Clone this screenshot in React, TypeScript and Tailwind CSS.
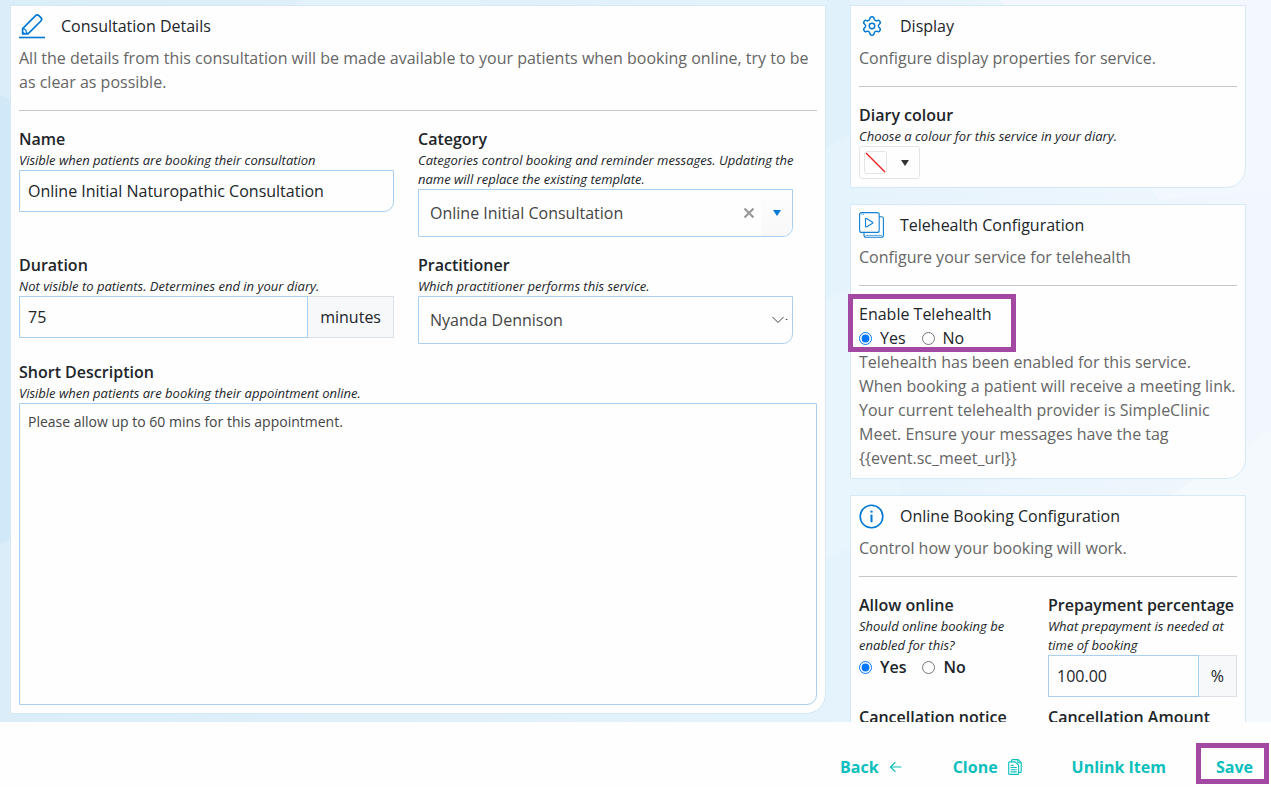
import { useState } from 'react';
import type { ReactNode } from 'react';
import { Settings } from 'lucide-react';

const PencilIcon = () => (
  <svg width="27" height="26" viewBox="0 0 27 26" fill="none" stroke="#0078d4" strokeWidth="1.7" strokeLinejoin="round" className="-mr-px shrink-0">
    <path d="M3.6 20.8v-5.2L16.6 2.7a2.4 2.4 0 0 1 3.3 0l2 2a2.4 2.4 0 0 1 0 3.3L9 20.8z" />
    <path d="M3.8 16l1.6-.2 1.7 1.7v1.6l1.7 1.5M5.2 19.4l-1.5 1.4" strokeWidth="1.2" />
    <path d="M0 24.5h26" strokeWidth="1.6" />
  </svg>
);

const GearIcon = () => (
  <span className="flex w-[25px] shrink-0 justify-center">
    <Settings size={22} strokeWidth={1.6} color="#0078d4" />
  </span>
);

const VideoStackIcon = () => (
  <svg width="25" height="26" viewBox="0 0 25 26" fill="none" stroke="#1280d6" strokeWidth="1.1" strokeLinejoin="round" strokeLinecap="round" className="shrink-0">
    <rect x="0.6" y="0.6" width="19.6" height="19.8" rx="2" />
    <path d="M2.6 2.2h.3M4.4 2.2h.3" strokeWidth="0.8" />
    <path d="M6.5 7v7.4a.6.6 0 0 0 .9.5l6.2-3.6a.6.6 0 0 0 0-1L7.4 6.5a.6.6 0 0 0-.9.5z" />
    <path d="M20.4 4.8h2a2 2 0 0 1 2 2v16.4a2 2 0 0 1-2 2H7a2 2 0 0 1-2-2v-2.6" />
    <path d="M7 23.4h15.4" strokeWidth="0.7" />
  </svg>
);

const InfoIcon = () => (
  <svg width="25" height="25" viewBox="0 0 25 25" fill="none" stroke="#0078d4" className="shrink-0">
    <circle cx="12.5" cy="12.5" r="11.3" strokeWidth="1.6" />
    <path d="M12.5 10.6v7.6" strokeWidth="2" />
    <path d="M12.5 6.6v2" strokeWidth="2.2" />
  </svg>
);

const BackArrow = () => (
  <svg width="14" height="16" viewBox="0 0 14 16" fill="none" stroke="currentColor" strokeWidth="1.1" strokeLinecap="round" strokeLinejoin="round">
    <path d="M12 8H1.5M6 3.5L1.5 8 6 12.5" />
  </svg>
);

const CopyIcon = () => (
  <svg width="14" height="16" viewBox="0 0 14 16" fill="none" stroke="currentColor" strokeWidth="1.1" strokeLinecap="round" strokeLinejoin="round">
    <path d="M3.5 2.8V1.6a1 1 0 0 1 1-1h5.7l3 3v8.8a1 1 0 0 1-1 1h-1.4" />
    <path d="M9.8.8v3h3" />
    <path d="M1.7 2.9h5.4l3.5 3.3v8.2a1 1 0 0 1-1 1H1.7a1 1 0 0 1-1-1V3.9a1 1 0 0 1 1-1z" />
    <path d="M3 6.3h2.5M3 8.5h5.3M3 10.7h5.3M3 12.9h5.3" />
  </svg>
);

// faint faceted backdrop behind the cards
const Backdrop = () => (
  <svg className="absolute inset-0 h-full w-full" viewBox="0 0 1271 722" preserveAspectRatio="none" aria-hidden="true">
    <defs>
      <linearGradient id="sky" x1="0" x2="1" y1="0" y2="0">
        <stop offset="0" stopColor="#daedf9" />
        <stop offset="0.66" stopColor="#e5f3fc" />
        <stop offset="1" stopColor="#f1f7fd" />
      </linearGradient>
    </defs>
    <rect width="1271" height="722" fill="url(#sky)" />
    <path d="M0 95L400 300 0 545z" fill="#d1e8f8" />
    <path d="M290 6L300 0H480V6z" fill="#e3f2fb" />
    <path d="M826 0H850L860 130 826 148z" fill="#e0f1fc" />
    <path d="M826 300L900 260V520L826 560z" fill="#e9f5fc" />
    <path d="M1000 0H1271V190L1160 200z" fill="#f2f8fd" />
    <path d="M1170 495L1271 430V722H1200z" fill="#f4f9fd" />
  </svg>
);

interface CardProps {
  icon: ReactNode;
  title: string;
  description: string;
  children: ReactNode;
}

const Card = ({ icon, title, description, children }: CardProps) => (
  <section className="rounded-br-[20px] border border-[#d6e9f7] bg-[#fefefe] p-2">
    <div className="mb-2 flex h-6 items-center gap-4">
      {icon}
      <h2 className="font-medium">{title}</h2>
    </div>
    <p className="text-[#666]">{description}</p>
    <hr className="my-4 border-[#c4c6c8]" />
    {children}
  </section>
);

interface FieldProps {
  id: string;
  label: string;
  help?: string;
  className?: string;
  children: ReactNode;
}

const Field = ({ id, label, help, className, children }: FieldProps) => (
  <div className={className}>
    <label htmlFor={id} className="block font-semibold">{label}</label>
    {help && <p className="-mr-1 text-[13px] leading-[19px] italic">{help}</p>}
    {children}
  </div>
);

interface YesNoProps {
  name: string;
  value: boolean;
  onChange: (value: boolean) => void;
}

const YesNo = ({ name, value, onChange }: YesNoProps) => (
  <div className="flex gap-4">
    <label className="flex items-center gap-2">
      <input type="radio" name={name} className="size-[13px]" checked={value} onChange={() => onChange(true)} />
      Yes
    </label>
    <label className="flex items-center gap-2">
      <input type="radio" name={name} className="size-[13px]" checked={!value} onChange={() => onChange(false)} />
      No
    </label>
  </div>
);

const footerButton = 'relative flex items-center gap-2.5 border border-transparent px-4 py-1.5 font-bold text-[#0bbfbc]';

export default function App() {
  const [name, setName] = useState('Online Initial Naturopathic Consultation');
  const [category, setCategory] = useState('Online Initial Consultation');
  const [duration, setDuration] = useState('75');
  const [description, setDescription] = useState('Please allow up to 60 mins for this appointment.');
  const [telehealth, setTelehealth] = useState(true);
  const [allowOnline, setAllowOnline] = useState(true);
  const [prepayment, setPrepayment] = useState('100.00');

  return (
    <div className="flex h-screen flex-col bg-[#fefefe] font-['Open_Sans',sans-serif] text-base text-[#212529]">
      <div className="relative min-h-0 flex-1">
        <Backdrop />
        <main className="relative grid h-full grid-cols-[minmax(0,68fr)_minmax(0,33fr)] items-start gap-6 overflow-y-auto pt-[5px] pr-[25px] pb-2 pl-2.5 [scrollbar-width:none]">
          <Card
            icon={<PencilIcon />}
            title="Consultation Details"
            description="All the details from this consultation will be made available to your patients when booking online, try to be as clear as possible."
          >
            <div className="grid grid-cols-2 gap-y-4">
              <Field id="name" label="Name" help="Visible when patients are booking their consultation" className="pr-6">
                <input
                  id="name"
                  className="h-[42px] w-full rounded-br-[10px] border border-[#a9d0f0] px-2"
                  value={name}
                  onChange={e => setName(e.target.value)}
                />
              </Field>

              <Field
                id="category"
                label="Category"
                help="Categories control booking and reminder messages. Updating the name will replace the existing template."
                className="pr-6"
              >
                <div className="flex h-12 overflow-hidden rounded-br-[10px] border border-[#a9d0f0] text-[#444]">
                  <select
                    id="category"
                    className="min-w-0 flex-1 appearance-none pl-[11px]"
                    value={category}
                    onChange={e => setCategory(e.target.value)}
                  >
                    <option value=""></option>
                    <option>Online Initial Consultation</option>
                  </select>
                  <button type="button" aria-label="Clear category" className="px-1.5" onClick={() => setCategory('')}>
                    <svg width="12" height="12" viewBox="0 0 12 12" stroke="#999" strokeWidth="2.2">
                      <path d="M1.5 1.5l9 9M10.5 1.5l-9 9" />
                    </svg>
                  </button>
                  <span className="flex w-[31px] items-center justify-center bg-linear-to-b from-[#fefefe] to-[#f8f8f8]">
                    <svg width="8" height="6" viewBox="0 0 8 6">
                      <path d="M0 0h8L4 6z" fill="#0078d4" />
                    </svg>
                  </span>
                </div>
              </Field>

              <Field id="duration" label="Duration" help="Not visible to patients. Determines end in your diary." className="pr-6">
                <div className="flex h-[42px]">
                  <input
                    id="duration"
                    className="min-w-0 flex-1 border border-[#a9d0f0] px-2"
                    value={duration}
                    onChange={e => setDuration(e.target.value)}
                  />
                  <span className="flex items-center border border-l-0 border-[#dbe0e6] bg-[#f7f8fa] px-3">minutes</span>
                </div>
              </Field>

              <Field id="practitioner" label="Practitioner" help="Which practitioner performs this service." className="pr-6">
                <div className="relative">
                  <select
                    id="practitioner"
                    className="h-12 w-full appearance-none rounded-br-[10px] border border-[#a9d0f0] pl-[11px] text-[#444]"
                  >
                    <option>Nyanda Dennison</option>
                  </select>
                  <svg
                    width="18"
                    height="10"
                    viewBox="0 0 18 10"
                    fill="none"
                    stroke="#444"
                    className="pointer-events-none absolute top-[19px] right-1"
                  >
                    <path d="M1.5 2L7 7.500L12.5 2M14.800 4.500h1.600" />
                  </svg>
                </div>
              </Field>

              <Field
                id="short-description"
                label="Short Description"
                help="Visible when patients are booking their appointment online."
                className="col-span-2"
              >
                <textarea
                  id="short-description"
                  className="block h-[302px] w-full resize-none rounded-br-[10px] border border-[#a9d0f0] p-2 text-sm text-[#444]"
                  value={description}
                  onChange={e => setDescription(e.target.value)}
                />
              </Field>
            </div>
          </Card>

          <div className="flex flex-col gap-4">
            <Card icon={<GearIcon />} title="Display" description="Configure display properties for service.">
              <Field id="diary-colour" label="Diary colour" help="Choose a colour for this service in your diary.">
                <button
                  id="diary-colour"
                  type="button"
                  className="flex h-[33px] items-center gap-3.5 rounded-[3px] border border-[#e5e5e5] pr-2.5 pl-1"
                >
                  <svg width="23" height="23" viewBox="0 0 23 23" fill="none">
                    <rect x="0.5" y="0.5" width="22" height="22" rx="2.5" stroke="#e5e5e5" />
                    <path d="M2 2l19 19" stroke="#f01a1a" strokeWidth="1.2" />
                  </svg>
                  <svg width="8" height="6" viewBox="0 0 8 6">
                    <path d="M0 0h8L4 6z" fill="#333" />
                  </svg>
                </button>
              </Field>
            </Card>

            <Card icon={<VideoStackIcon />} title="Telehealth Configuration" description="Configure your service for telehealth">
              <div className="relative w-fit">
                <fieldset>
                  <legend>Enable Telehealth</legend>
                  <YesNo name="telehealth" value={telehealth} onChange={setTelehealth} />
                </fieldset>
                <div className="pointer-events-none absolute -top-2 -right-6 -bottom-0.5 -left-[11px] border-[5px] border-[#a349a4]" />
              </div>
              <p className="text-[#666]">
                Telehealth has been enabled for this service. When booking a patient will receive a meeting link. Your current
                telehealth provider is SimpleClinic Meet. Ensure your messages have the tag {'{{event.sc_meet_url}}'}
              </p>
            </Card>

            <Card icon={<InfoIcon />} title="Online Booking Configuration" description="Control how your booking will work.">
              <div className="grid grid-cols-2 gap-y-2">
                <fieldset className="font-semibold">
                  <legend>Allow online</legend>
                  <p className="pr-6 text-[13px] leading-[19px] font-normal italic">Should online booking be enabled for this?</p>
                  <YesNo name="allow-online" value={allowOnline} onChange={setAllowOnline} />
                </fieldset>

                <Field id="prepayment" label="Prepayment percentage" help="What prepayment is needed at time of booking">
                  <div className="flex h-[42px]">
                    <input
                      id="prepayment"
                      className="min-w-0 flex-1 border border-[#a9d0f0] px-2"
                      value={prepayment}
                      onChange={e => setPrepayment(e.target.value)}
                    />
                    <span className="flex items-center border border-l-0 border-[#dbe0e6] bg-[#f7f8fa] px-3">%</span>
                  </div>
                </Field>

                <Field id="cancellation-notice" label="Cancellation notice" className="pr-6">
                  <input id="cancellation-notice" className="h-[42px] w-full border border-[#a9d0f0] px-2" />
                </Field>
                <Field id="cancellation-amount" label="Cancellation Amount">
                  <input id="cancellation-amount" className="h-[42px] w-full border border-[#a9d0f0] px-2" />
                </Field>
              </div>
            </Card>
          </div>
        </main>
      </div>

      <footer className="flex justify-end gap-4 pt-[26px] pr-px pb-px">
        <button type="button" className={footerButton}>
          Back <BackArrow />
        </button>
        <button type="button" className={footerButton}>
          Clone <CopyIcon />
        </button>
        <button type="button" className={footerButton}>Unlink Item</button>
        <button type="button" className={footerButton}>
          Save
          <span className="pointer-events-none absolute -top-1.5 right-0 bottom-px -left-1 border-[5px] border-[#a349a4]" />
        </button>
      </footer>
    </div>
  );
}
